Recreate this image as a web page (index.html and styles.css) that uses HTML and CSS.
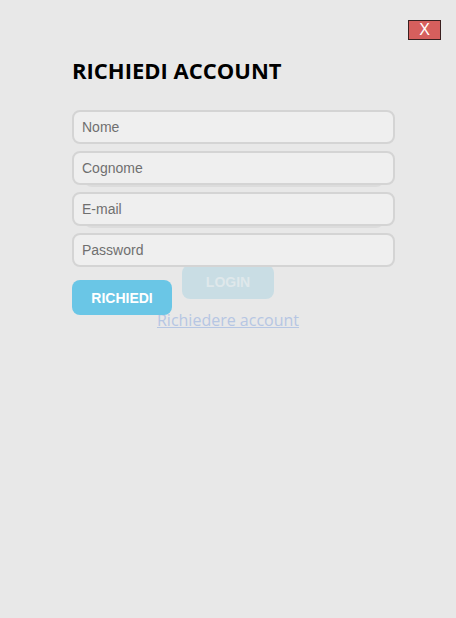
FILE: index.html
```html
<!DOCTYPE html>
<html lang="it">
<head>
<meta charset="utf-8">
<link rel="stylesheet" href="styles.css">
</head>
<body>
<main class="login-page">
  <div class="login-form">
    <div class="ghost-input"></div>
    <div class="ghost-input"></div>
    <button class="login-btn">LOGIN</button>
    <a class="request-link" href="#">Richiedere account</a>
  </div>
</main>
<section class="modal">
  <div class="modal-top">
    <button class="close-btn">X</button>
  </div>
  <div class="modal-body">
    <h1 class="title">RICHIEDI ACCOUNT</h1>
    <form class="form">
      <input class="field" type="text" placeholder="Nome">
      <input class="field" type="text" placeholder="Cognome">
      <input class="field" type="text" placeholder="E-mail">
      <input class="field" type="password" placeholder="Password">
      <button class="submit-btn" type="button">RICHIEDI</button>
    </form>
  </div>
</section>
</body>
</html>
```
FILE: styles.css
```css
html, body {
  margin: 0;
  padding: 0;
  background: #e8e8e8;
  width: 456px;
  height: 618px;
  overflow: hidden;
}
body {
  position: relative;
  font-family: "Liberation Sans", Arial, sans-serif;
}
.login-page {
  display: flex;
  justify-content: center;
  padding-top: 153px;
}
.login-form {
  display: flex;
  flex-direction: column;
  align-items: center;
  width: 300px;
  margin-left: 12px;
}
.ghost-input {
  width: 300px;
  height: 34px;
  border-radius: 8px;
  background: #dcdcdc;
  margin-bottom: 7px;
}
.login-btn {
  margin-top: 30px;
  margin-left: -12px;
  width: 92px;
  height: 34px;
  border: none;
  border-radius: 8px;
  background: #c9dde4;
  color: #dfe8eb;
  font-family: "Liberation Sans", Arial, sans-serif;
  font-weight: bold;
  font-size: 14px;
  padding: 0;
}
.request-link {
  margin-top: 10px;
  margin-left: -12px;
  font-family: "Open Sans", sans-serif;
  font-size: 16px;
  color: #b6c6e3;
  text-decoration: underline;
}
.modal {
  position: absolute;
  inset: 0;
}
.modal-top {
  display: flex;
  justify-content: flex-end;
  padding: 20px 15px 0 0;
}
.close-btn {
  width: 33px;
  height: 20px;
  background: #d65f5d;
  border: 1px solid #3a2020;
  color: #fff;
  font-family: "Liberation Sans", Arial, sans-serif;
  font-size: 16px;
  line-height: 16px;
  padding: 0;
}
.modal-body {
  padding: 0 61px 0 72px;
}
.title {
  margin: 16px 0 0 0;
  font-family: "Open Sans", sans-serif;
  font-weight: 700;
  font-size: 22px;
  line-height: 28px;
  color: #000;
}
.form {
  display: flex;
  flex-direction: column;
  align-items: flex-start;
  gap: 7px;
  margin-top: 26px;
}
.field {
  box-sizing: border-box;
  width: 323px;
  height: 34px;
  border: 2px solid #d4d4d4;
  border-radius: 8px;
  background: #efefef;
  padding: 0 8px;
  font-family: "Liberation Sans", Arial, sans-serif;
  font-size: 14px;
  color: #555;
  outline: none;
}
.field::placeholder {
  color: #6f6f6f;
}
.submit-btn {
  margin-top: 6px;
  width: 100px;
  height: 35px;
  border: none;
  border-radius: 8px;
  background: #6ac6e6;
  color: #fff;
  font-family: "Liberation Sans", Arial, sans-serif;
  font-weight: bold;
  font-size: 14px;
  padding: 0;
}
```
